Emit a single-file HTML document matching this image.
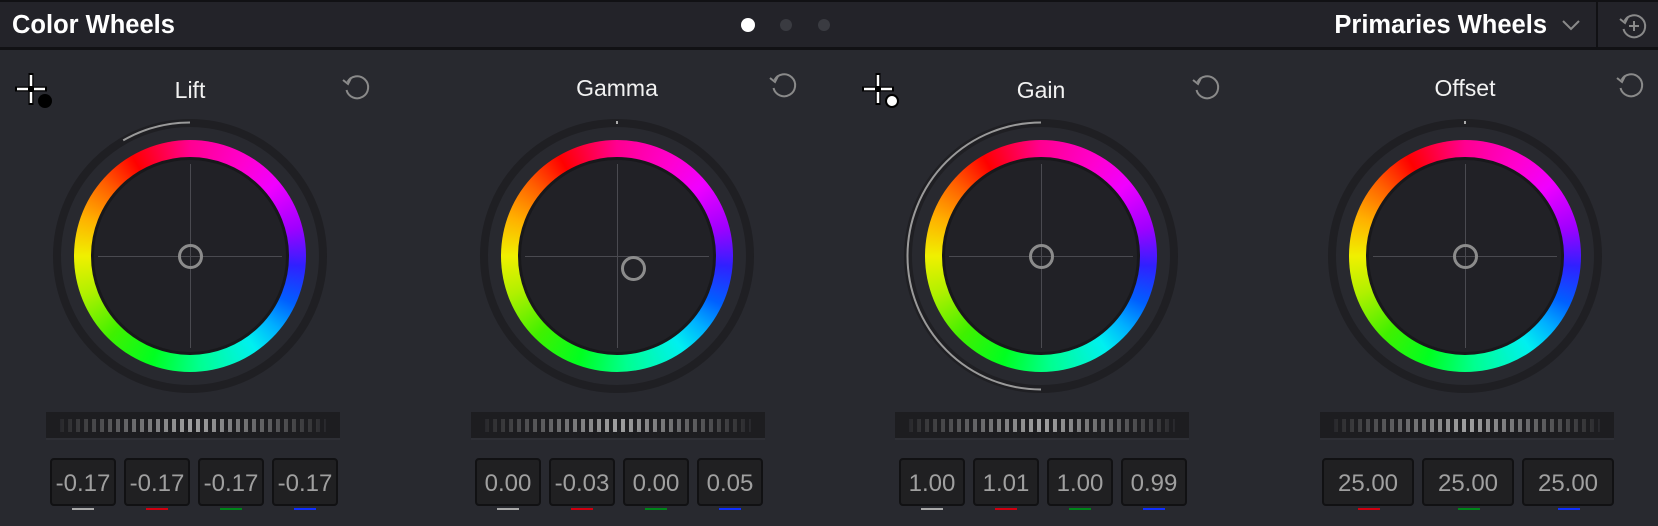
<!DOCTYPE html>
<html><head><meta charset="utf-8"><style>
*{margin:0;padding:0;box-sizing:border-box}
body{width:1658px;height:526px;background:#28292f;position:relative;overflow:hidden;font-family:"Liberation Sans","DejaVu Sans",sans-serif}
.hdr{position:absolute;left:0;top:0;width:1658px;height:50px;background:#232329;border-top:2px solid #111114;border-bottom:3px solid #111114}
.a{position:absolute}
.title{color:#fff;font-weight:bold;font-size:25.5px}
.lbl{position:absolute;color:#f2f2f2;font-size:23px;width:200px;text-align:center}
.dring{position:absolute;width:274px;height:274px;border-radius:50%;border:8px solid #1f1f23}
.cring{position:absolute;width:232px;height:232px;border-radius:50%;background:conic-gradient(from 0deg,#ff0090 0deg,#ff00d0 30deg,#f000ff 50deg,#a000ff 75deg,#3020ff 95deg,#0060ff 115deg,#00b0ff 130deg,#00f0f0 145deg,#00ff90 175deg,#00ff20 200deg,#40f000 225deg,#b0f000 250deg,#f0f000 270deg,#ffb000 290deg,#ff6000 310deg,#ff0000 330deg,#ff0060 350deg,#ff0090 360deg)}
.disc{position:absolute;width:198px;height:198px;border-radius:50%;background:#212126;border:3px solid #18181b}
.hl{position:absolute;height:1px;width:184px;background:#4a4a50}
.vl{position:absolute;width:1px;height:184px;background:#4a4a50}
.knob{position:absolute;width:25px;height:25px;border-radius:50%;border:3.5px solid #8c8c8c}
.bar{position:absolute;width:294px;height:28px;background:#1d1d20;border-bottom:2px solid #2e2f35}
.ticks{position:absolute;left:14px;right:14px;top:7px;height:13px;background:repeating-linear-gradient(90deg,#b8b8b8 0 4px,transparent 4px 8px);-webkit-mask-image:linear-gradient(90deg,rgba(0,0,0,.08),rgba(0,0,0,.85) 50%,rgba(0,0,0,.08));mask-image:linear-gradient(90deg,rgba(0,0,0,.08),rgba(0,0,0,.85) 50%,rgba(0,0,0,.08))}
.box{position:absolute;top:458px;height:48px;background:#202022;border:2px solid #111113;border-radius:4px;color:#a0a0a0;font-size:24px;text-align:center;line-height:48px}
.ul{position:absolute;top:508px;width:22px;height:2px}
</style></head><body>
<div class="hdr">
<div class="a title" style="left:12px;top:9px">Color Wheels</div>
<div class="a" style="left:741px;top:16px;width:14px;height:14px;border-radius:50%;background:#fff"></div>
<div class="a" style="left:780px;top:17px;width:12px;height:12px;border-radius:50%;background:#3a3b41"></div>
<div class="a" style="left:818px;top:17px;width:12px;height:12px;border-radius:50%;background:#3a3b41"></div>
<div class="a title" style="left:1300px;top:9px;width:247px;text-align:right">Primaries Wheels</div>
<svg class="a" style="left:1561px;top:16px" width="20" height="14"><path d="M2 3 L10 11 L18 3" fill="none" stroke="#8a8a8a" stroke-width="2"/></svg>
<div class="a" style="left:1596px;top:0;width:2px;height:46px;background:#111114"></div>
<svg class="a" style="left:1618px;top:8px" width="32" height="32"><path d="M6.5 11 A11 11 0 1 1 5.5 19" fill="none" stroke="#8a8a8a" stroke-width="2"/><path d="M2 9 L7 13 L10 7" fill="none" stroke="#8a8a8a" stroke-width="2"/><path d="M16 11 V21 M11 16 H21" stroke="#8a8a8a" stroke-width="2"/></svg>
</div>

<svg class="a" style="left:10px;top:68px" width="50" height="45"><path d="M21 5 V37 M5 21 H37" stroke="#000" stroke-width="5"/><path d="M21 7 V18 M21 24 V35 M7 21 H18 M24 21 H35" stroke="#fff" stroke-width="2.5"/><circle cx="35" cy="33" r="7" fill="#000"/></svg>
<svg class="a" style="left:857px;top:68px" width="50" height="45"><path d="M21 5 V37 M5 21 H37" stroke="#000" stroke-width="5"/><path d="M21 7 V18 M21 24 V35 M7 21 H18 M24 21 H35" stroke="#fff" stroke-width="2.5"/><circle cx="35" cy="33" r="6" fill="#fff" stroke="#000" stroke-width="2"/></svg>

<div class="lbl" style="left:90px;top:77px">Lift</div>
<div class="lbl" style="left:517px;top:75px">Gamma</div>
<div class="lbl" style="left:941px;top:77px">Gain</div>
<div class="lbl" style="left:1365px;top:75px">Offset</div>

<svg class="a" style="left:341px;top:71px" width="32" height="32"><path d="M6.5 11 A11 11 0 1 1 5.5 19" fill="none" stroke="#8a8a8a" stroke-width="2"/><path d="M2 9 L7 13 L10 7" fill="none" stroke="#8a8a8a" stroke-width="2"/></svg>
<svg class="a" style="left:768px;top:69px" width="32" height="32"><path d="M6.5 11 A11 11 0 1 1 5.5 19" fill="none" stroke="#8a8a8a" stroke-width="2"/><path d="M2 9 L7 13 L10 7" fill="none" stroke="#8a8a8a" stroke-width="2"/></svg>
<svg class="a" style="left:1191px;top:71px" width="32" height="32"><path d="M6.5 11 A11 11 0 1 1 5.5 19" fill="none" stroke="#8a8a8a" stroke-width="2"/><path d="M2 9 L7 13 L10 7" fill="none" stroke="#8a8a8a" stroke-width="2"/></svg>
<svg class="a" style="left:1615px;top:69px" width="32" height="32"><path d="M6.5 11 A11 11 0 1 1 5.5 19" fill="none" stroke="#8a8a8a" stroke-width="2"/><path d="M2 9 L7 13 L10 7" fill="none" stroke="#8a8a8a" stroke-width="2"/></svg>

<div class="dring" style="left:53px;top:119px"></div><div class="cring" style="left:74px;top:140px"></div><div class="disc" style="left:91px;top:157px"></div>
<div class="hl" style="left:98px;top:256px"></div><div class="vl" style="left:190px;top:164px"></div><div class="knob" style="left:177.5px;top:243.5px"></div>

<div class="dring" style="left:480px;top:119px"></div><div class="cring" style="left:501px;top:140px"></div><div class="disc" style="left:518px;top:157px"></div>
<div class="hl" style="left:525px;top:256px"></div><div class="vl" style="left:617px;top:164px"></div><div class="knob" style="left:621px;top:256px"></div>

<div class="dring" style="left:904px;top:119px"></div><div class="cring" style="left:925px;top:140px"></div><div class="disc" style="left:942px;top:157px"></div>
<div class="hl" style="left:949px;top:256px"></div><div class="vl" style="left:1041px;top:164px"></div><div class="knob" style="left:1028.5px;top:243.5px"></div>

<div class="dring" style="left:1328px;top:119px"></div><div class="cring" style="left:1349px;top:140px"></div><div class="disc" style="left:1366px;top:157px"></div>
<div class="hl" style="left:1373px;top:256px"></div><div class="vl" style="left:1465px;top:164px"></div><div class="knob" style="left:1452.5px;top:243.5px"></div>

<svg class="a" style="left:0;top:0" width="1658" height="526">
<path d="M190 122.5 A133.5 133.5 0 0 0 123.2 140.4" fill="none" stroke="#9a9a9a" stroke-width="2"/>
<path d="M1041 122.5 A133.5 133.5 0 0 0 1041 389.5" fill="none" stroke="#9a9a9a" stroke-width="2"/>
<path d="M617 121 V124 M1465 121 V124" stroke="#aaa" stroke-width="2"/>
</svg>

<div class="bar" style="left:46px;top:412px"><div class="ticks"></div></div>
<div class="bar" style="left:471px;top:412px"><div class="ticks"></div></div>
<div class="bar" style="left:895px;top:412px"><div class="ticks"></div></div>
<div class="bar" style="left:1320px;top:412px"><div class="ticks"></div></div>

<div class="box" style="left:50px;width:66px">-0.17</div><div class="ul" style="left:72px;background:#aaa"></div>
<div class="box" style="left:124px;width:66px">-0.17</div><div class="ul" style="left:146px;background:#d00010"></div>
<div class="box" style="left:198px;width:66px">-0.17</div><div class="ul" style="left:220px;background:#00861a"></div>
<div class="box" style="left:272px;width:66px">-0.17</div><div class="ul" style="left:294px;background:#1030ff"></div>

<div class="box" style="left:475px;width:66px">0.00</div><div class="ul" style="left:497px;background:#aaa"></div>
<div class="box" style="left:549px;width:66px">-0.03</div><div class="ul" style="left:571px;background:#d00010"></div>
<div class="box" style="left:623px;width:66px">0.00</div><div class="ul" style="left:645px;background:#00861a"></div>
<div class="box" style="left:697px;width:66px">0.05</div><div class="ul" style="left:719px;background:#1030ff"></div>

<div class="box" style="left:899px;width:66px">1.00</div><div class="ul" style="left:921px;background:#aaa"></div>
<div class="box" style="left:973px;width:66px">1.01</div><div class="ul" style="left:995px;background:#d00010"></div>
<div class="box" style="left:1047px;width:66px">1.00</div><div class="ul" style="left:1069px;background:#00861a"></div>
<div class="box" style="left:1121px;width:66px">0.99</div><div class="ul" style="left:1143px;background:#1030ff"></div>

<div class="box" style="left:1322px;width:92px">25.00</div><div class="ul" style="left:1358px;background:#d00010"></div>
<div class="box" style="left:1422px;width:92px">25.00</div><div class="ul" style="left:1458px;background:#00861a"></div>
<div class="box" style="left:1522px;width:92px">25.00</div><div class="ul" style="left:1558px;background:#1030ff"></div>
</body></html>
